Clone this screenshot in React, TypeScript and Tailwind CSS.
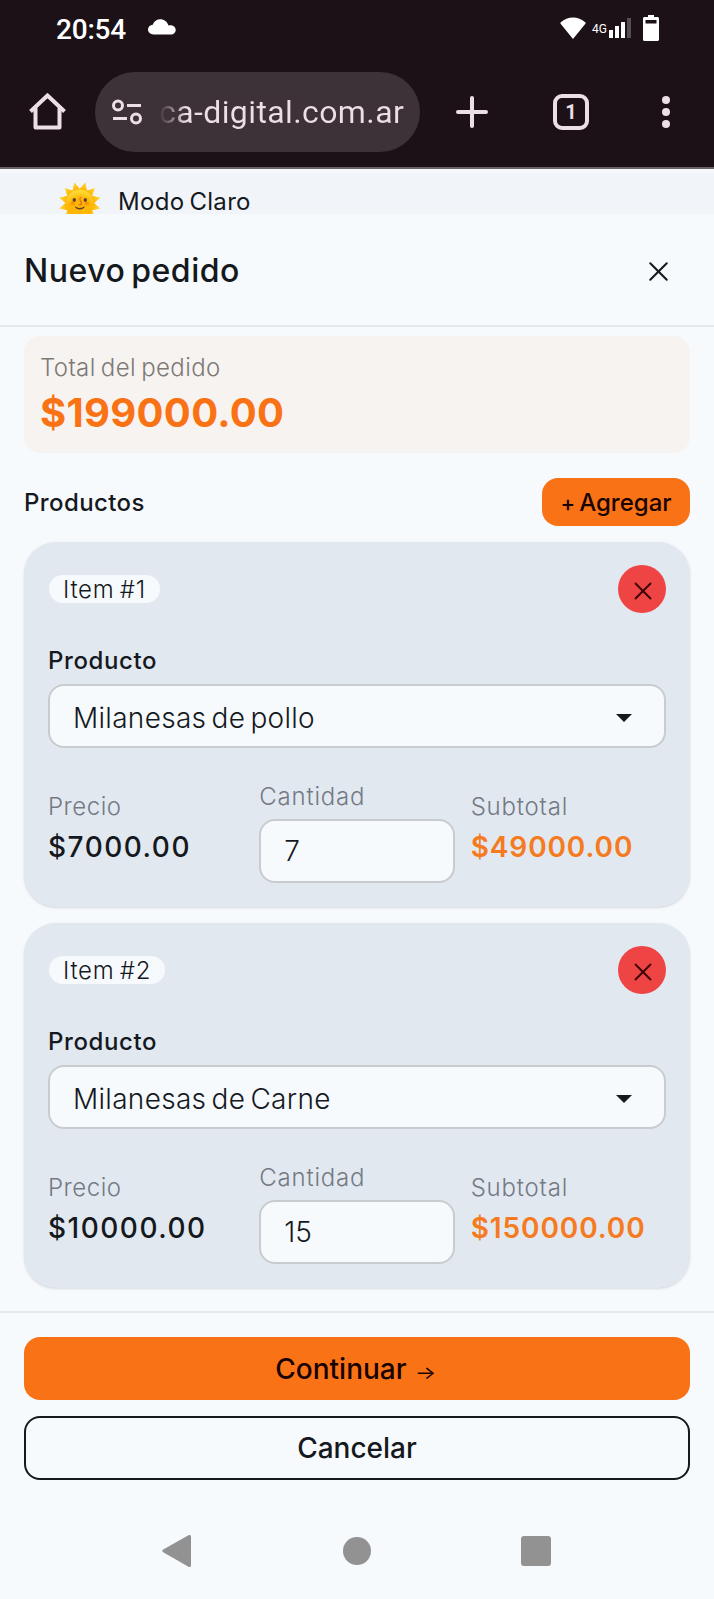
import { X } from "lucide-react";

const items = [
  { id: 1, product: "Milanesas de pollo", price: "$7000.00", qty: "7", subtotal: "$49000.00" },
  { id: 2, product: "Milanesas de Carne", price: "$10000.00", qty: "15", subtotal: "$150000.00" },
];

function StatusBar() {
  return (
    <div className="h-[56px] pl-[56px] pr-[55px] flex items-center justify-between text-white">
      <div className="flex items-center">
        <span className="text-[28px] leading-8 font-medium tracking-[-0.2px] pt-[3px]">20:54</span>
        <svg className="ml-[22px] -mt-[2px]" width="28" height="16" viewBox="0 0 28 16" fill="#fff">
          <path d="M5.5 15.5C2.5 15.5 0 13.4 0 10.6c0-2.600 2-4.700 4.700-4.900C6.200 2.300 8.800.3 12.200.3c4 0 7.200 2.500 8.200 6.100 4.300-.6 7.300 1.500 7.300 4.600 0 2.700-2.100 4.500-4.900 4.500z" />
        </svg>
      </div>
      <div className="flex items-center">
        <svg width="26" height="22" viewBox="0 0 26 22" fill="#fff">
          <path d="M13 22 .6 6.800C.2 6.300.3 5.700.8 5.300 4.300 2.200 8.400.6 13 .6s8.700 1.600 12.200 4.700c.5.400.6 1 .2 1.500z" />
        </svg>
        <span className="ml-[6px] text-[12px] leading-4 pt-[2px]">4G</span>
        <svg className="ml-[2px]" width="22" height="20" viewBox="0 0 22 20" fill="#fff">
          <rect x="0" y="12" width="4" height="8" />
          <rect x="6" y="8" width="4" height="12" />
          <rect x="12" y="4" width="4" height="16" />
          <rect x="18" y="0" width="4" height="20" fill="#554e52" />
        </svg>
        <svg className="ml-[12px]" width="16" height="26" viewBox="0 0 16 26">
          <path d="M5 0h6v2h3.500c.8 0 1.500.7 1.500 1.500v21c0 .8-.7 1.500-1.500 1.500h-13C.7 26 0 25.300 0 24.500v-21C0 2.700.7 2 1.500 2H5z" fill="#fff" />
          <rect x="2.500" y="5" width="11" height="3.500" fill="#1b1117" />
        </svg>
      </div>
    </div>
  );
}

function BrowserBar() {
  return (
    <div className="h-[110px] pt-px pl-[29px] flex items-center text-[#ecdfe5]">
      <svg width="37" height="37" viewBox="0 0 37 37" fill="none" stroke="currentColor" strokeWidth="4" strokeLinejoin="round">
        <path d="M1.500 18.500 18.500 2.500l17 16" strokeLinejoin="miter" />
        <path d="M6.500 15v19.500h24V15" />
      </svg>
      <div className="ml-[29px] h-[80px] w-[325px] rounded-full bg-[#3d3238] flex items-center pl-[17px]">
        <svg width="31" height="26" viewBox="0 0 31 26" fill="none" stroke="currentColor" strokeWidth="3">
          <circle cx="6" cy="6.500" r="4.500" />
          <path d="M15 6.500h14M1 19.500h14" />
          <circle cx="24" cy="19.500" r="4.500" />
        </svg>
        <span className="ml-[16px] text-[32px] leading-10 tracking-[0.4px] whitespace-nowrap bg-linear-to-r from-[#3d3238] to-[#ecdfe5] to-[11%] bg-clip-text text-transparent">
          ca-digital.com.ar
        </span>
      </div>
      <svg className="ml-[36px]" width="32" height="32" viewBox="0 0 32 32" stroke="currentColor" strokeWidth="4" strokeLinecap="round">
        <path d="M16 2v28M2 16h28" />
      </svg>
      <div className="ml-[65px] w-[36px] h-[36px] rounded-[9px] border-4 border-[#ecdfe5] flex items-center justify-center text-[20px] leading-none font-bold">
        1
      </div>
      <svg className="ml-[73px]" width="8" height="32" viewBox="0 0 8 32" fill="currentColor" overflow="visible">
        <circle cx="4" cy="4" r="4" />
        <circle cx="4" cy="16" r="4" />
        <circle cx="4" cy="28" r="4" />
      </svg>
    </div>
  );
}

function ItemCard({ item }: { item: (typeof items)[number] }) {
  return (
    <div className="h-[365px] rounded-[32px] bg-[#e2e8f0] px-6 pt-[23px] shadow-sm">
      <div className="flex items-center justify-between">
        <span className="ml-[1px] h-7 px-[14px] rounded-full bg-[#f7fafd] text-2xl leading-[30px] font-light tracking-[0.7px] [word-spacing:-2px]">
          Item #{item.id}
        </span>
        <button className="w-12 h-12 rounded-full bg-[#ef4444] flex items-center justify-center text-[#3a0608] pt-[3px] pl-px">
          <X size={30} strokeWidth={1.5} />
        </button>
      </div>
      <div className="mt-[36px] -mb-px text-2xl leading-6 font-medium tracking-[0.6px]">Producto</div>
      <div className="mt-3 h-16 rounded-2xl border-2 border-[#c9cccf] bg-[#f7fafd] flex items-center justify-between pl-[23px] pr-[32px]">
        <span className="pt-[3px] text-[28px] font-light tracking-[0.3px] [word-spacing:-3px] whitespace-nowrap">
          {item.product}
        </span>
        <svg width="16" height="8" viewBox="0 0 16 8" className="mt-[3px]" fill="#15191e">
          <path d="M0 0h16L8 8z" />
        </svg>
      </div>
      <div className="mt-8 grid grid-cols-3 gap-4">
        <div className="pt-[11px]">
          <div className="text-2xl leading-8 font-light text-[#737a84] tracking-[0.5px]">Precio</div>
          <div className="mt-1 text-[28px] leading-10 font-medium tracking-[1.5px]">{item.price}</div>
        </div>
        <div>
          <div className="pt-px text-2xl leading-8 font-light text-[#737a84] tracking-[0.8px]">Cantidad</div>
          <div className="mt-[6px] h-16 rounded-2xl border-2 border-[#c9cccf] bg-[#f7fafd] flex items-center pl-[23px] text-[28px] font-light">
            {item.qty}
          </div>
        </div>
        <div className="pt-[11px]">
          <div className="text-2xl leading-8 font-light text-[#737a84] tracking-[0.8px]">Subtotal</div>
          <div className="mt-1 text-[28px] leading-10 font-semibold tracking-[0.9px] text-[#f57a20]">{item.subtotal}</div>
        </div>
      </div>
    </div>
  );
}

export default function App() {
  return (
    <div className="w-[714px] h-[1599px] overflow-hidden bg-[#f7fafd] text-[#15191e] font-['Inter',sans-serif]">
      <div className="h-[169px] bg-[#1b1117] border-b-2 border-[#6b6268] font-['Roboto',sans-serif]">
        <StatusBar />
        <BrowserBar />
      </div>

      {/* page behind the modal, cut off by its top edge */}
      <div className="h-[45px] overflow-hidden bg-[#f1f5f9] border-t-4 border-[#f6f8fb] pl-[58px] flex items-start">
        <span className="w-[60px] text-[35px] leading-[58px] whitespace-nowrap">🌞</span>
        <span className="mt-[13px] text-2xl leading-8 tracking-[0.3px] [word-spacing:-2px]">Modo Claro</span>
      </div>

      <div className="h-[113px] border-b-2 border-[#e5e8ec] pl-6 pr-[39px] flex items-center justify-between">
        <h3 className="text-[32px] leading-10 font-medium tracking-[0.5px] [word-spacing:-3px] pt-[2px]">Nuevo pedido</h3>
        <X size={33} strokeWidth={1.5} className="mt-[3px]" />
      </div>

      <div className="px-6 pt-[9px]">
        <div className="h-[117px] rounded-2xl bg-[#f7f3f0] px-4 pt-4">
          <div className="text-2xl leading-8 font-light text-[#7d7977] tracking-[0.4px] [word-spacing:-2px]">Total del pedido</div>
          <div className="pt-[2px] text-[40px] leading-[54px] font-bold text-[#f97316] tracking-[0.3px]">$199000.00</div>
        </div>
        <div className="mt-[25px] mb-4 flex items-center justify-between">
          <span className="pt-px text-2xl font-medium tracking-[0.4px]">Productos</span>
          <button className="h-12 w-[148px] rounded-2xl bg-[#f97316] text-[#190300] text-2xl font-medium pt-px whitespace-nowrap">
            <span className="text-[22px] mr-[4px]">+</span>
            <span>Agregar</span>
          </button>
        </div>
        <div className="flex flex-col gap-4">
          {items.map((item) => (
            <ItemCard key={item.id} item={item} />
          ))}
        </div>
      </div>

      <div className="mt-[23px] border-t-2 border-[#e5e8ec] px-6 pt-6 flex flex-col gap-4 text-[28px] font-medium">
        <button className="h-[63px] rounded-2xl bg-[#f97316] text-[#190300] flex items-center justify-center">
          Continuar
          <span className="ml-[8px] mt-[8px] text-[18px] leading-none font-normal">
            <span className="inline-block scale-x-125 origin-left mr-[7px]">→</span>
          </span>
        </button>
        <button className="h-16 rounded-2xl border-2 border-[#15191e] flex items-center justify-center">
          Cancelar
        </button>
      </div>

      <div className="mt-[54px] pl-[162px] pr-[163px] flex items-center justify-between">
        <svg width="30" height="34" viewBox="0 0 30 34" fill="#929292">
          <path d="M1.200 15.400 26.500 1.300C27.700.7 29 1.300 29 2.600v28.800c0 1.300-1.300 1.900-2.500 1.300L1.200 18.200c-1.100-.6-1.100-2.200 0-2.800z" />
        </svg>
        <div className="w-7 h-7 rounded-full bg-[#929292]" />
        <div className="w-[30px] h-[30px] rounded-[3px] bg-[#929292]" />
      </div>
    </div>
  );
}
